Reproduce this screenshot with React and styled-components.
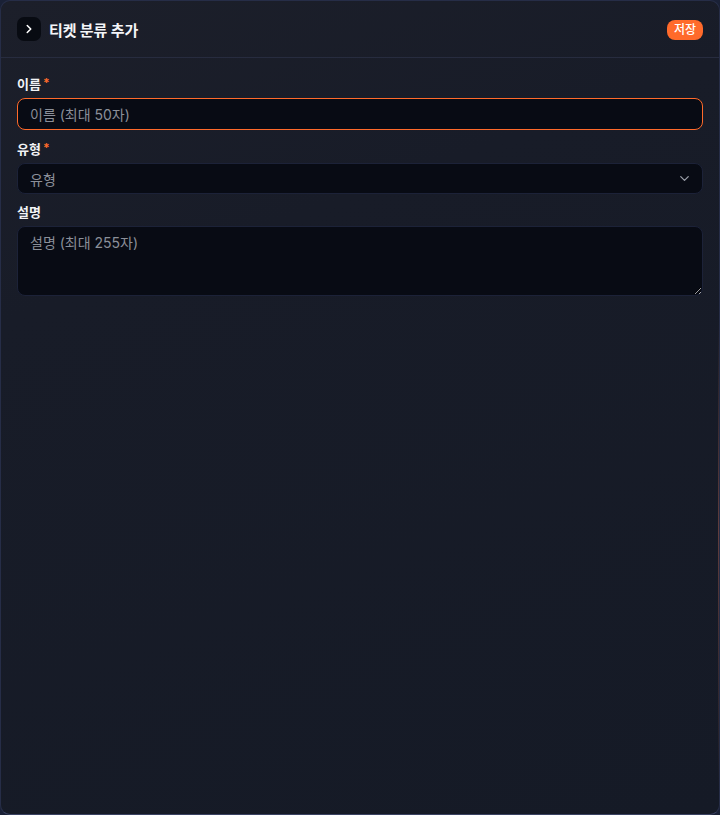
import React from "react";
import styled, { createGlobalStyle } from "styled-components";
import { ChevronRight, ChevronDown } from "lucide-react";

const Global = createGlobalStyle`
  html, body { margin: 0; padding: 0; background: #1a2136; }
  body { font-family: Inter, "Noto Sans CJK KR", "Noto Sans", sans-serif; color-scheme: dark; }
  * { box-sizing: border-box; }
`;

const Panel = styled.div`
  position: relative;
  width: 720px;
  height: 815px;
  border: 1px solid #262d47;
  border-bottom-color: #3a4262;
  border-radius: 10px;
  background: linear-gradient(160deg, #1c1f2a 0%, #181c28 30%, #151a26 100%);
  overflow: hidden;
  display: flex;
  flex-direction: column;
`;

const Glow = styled.div`
  position: absolute;
  right: -1px;
  top: 320px;
  width: 2px;
  height: 470px;
  background: linear-gradient(180deg, rgba(255,106,43,0) 0%, rgba(160,90,80,0.55) 45%, rgba(255,106,43,0) 100%);
`;

const Header = styled.header`
  height: 57px;
  display: flex;
  align-items: center;
  justify-content: space-between;
  padding: 0 16px;
  border-bottom: 1px solid #272c3f;
`;

const TitleGroup = styled.div`
  display: flex;
  align-items: center;
  gap: 8px;
`;

const IconButton = styled.button`
  width: 24px;
  height: 24px;
  border: none;
  border-radius: 7px;
  background: #080b12;
  color: #ffffff;
  display: flex;
  align-items: center;
  justify-content: center;
  padding: 0;
`;

const Title = styled.h1`
  margin: 0;
  font-size: 15px;
  font-weight: 700;
  color: #f4f5f8;
  letter-spacing: -0.1px;
`;

const SaveButton = styled.button`
  height: 20px;
  padding: 0 7px;
  border: none;
  border-radius: 8px;
  background: #ff6a2b;
  color: #fff;
  font-family: inherit;
  font-size: 12px;
  font-weight: 500;
  line-height: 20px;
  margin-top: 1px;
`;

const Form = styled.div`
  display: flex;
  flex-direction: column;
  gap: 10px;
  padding: 17px 16px 16px;
`;

const Field = styled.div`
  display: flex;
  flex-direction: column;
  gap: 6px;
`;

const Label = styled.label`
  display: flex;
  align-items: center;
  gap: 2px;
  font-size: 13px;
  font-weight: 700;
  line-height: 16px;
  min-height: 16px;
  color: #f2f3f6;
`;

const Required = styled.span`
  color: #ff6a2b;
  font-size: 12px;
  font-weight: 700;
  line-height: 17px;
  transform: translateY(-1px);
`;

const Input = styled.input`
  height: 32px;
  width: 100%;
  border: 1px solid ${(p) => (p.$focused ? "#ff6a2b" : "#1c2238")};
  border-radius: 8px;
  background: #080b14;
  color: #e6e8ee;
  padding: 0 12px;
  font-family: inherit;
  font-size: 14px;
  outline: none;
  &::placeholder { color: #8b8f99; }
`;

const SelectBox = styled.div`
  height: 31px;
  display: flex;
  align-items: center;
  justify-content: space-between;
  border: 1px solid #1c2238;
  border-radius: 8px;
  background: #080b14;
  padding: 0 10px 0 12px;
  color: #8b8f99;
  font-size: 14px;
`;

const TextArea = styled.textarea`
  height: 70px;
  width: 100%;
  border: 1px solid #1c2238;
  border-radius: 8px;
  background: #080b14;
  color: #e6e8ee;
  padding: 6px 12px;
  font-family: inherit;
  font-size: 14px;
  line-height: 20px;
  outline: none;
  resize: vertical;
  &::placeholder { color: #8b8f99; }
`;

export default function App() {
  return (
    <>
      <Global />
      <Panel>
        <Glow />
        <Header>
          <TitleGroup>
            <IconButton aria-label="닫기">
              <ChevronRight size={14} strokeWidth={2.6} />
            </IconButton>
            <Title>티켓 분류 추가</Title>
          </TitleGroup>
          <SaveButton>저장</SaveButton>
        </Header>
        <Form>
          <Field>
            <Label>이름<Required>*</Required></Label>
            <Input $focused placeholder="이름 (최대 50자)" />
          </Field>
          <Field>
            <Label>유형<Required>*</Required></Label>
            <SelectBox>
              <span>유형</span>
              <ChevronDown size={15} strokeWidth={2} color="#9a9ea8" />
            </SelectBox>
          </Field>
          <Field>
            <Label>설명</Label>
            <TextArea placeholder="설명 (최대 255자)" />
          </Field>
        </Form>
      </Panel>
    </>
  );
}
